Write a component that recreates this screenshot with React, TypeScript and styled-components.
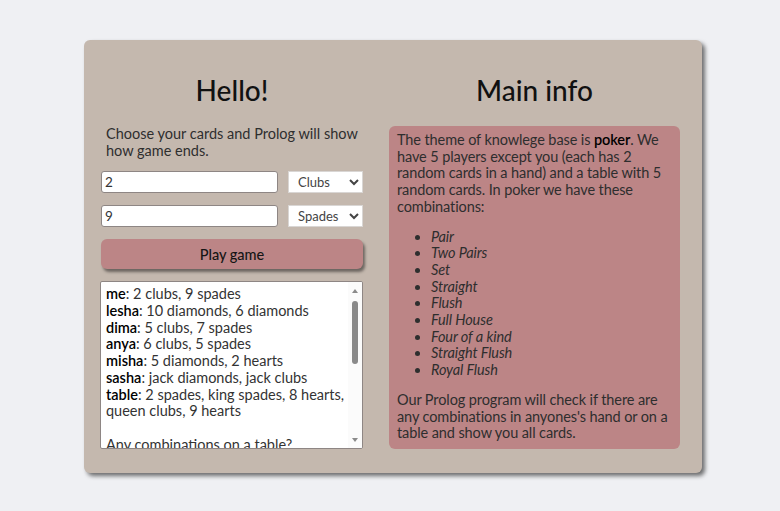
import React from "react";
import styled, { createGlobalStyle } from "styled-components";

const Global = createGlobalStyle`
  html, body { margin: 0; padding: 0; }
  body {
    background: #eff0f3;
    font-family: Lato, "Noto Sans", sans-serif;
    color: #2e2e2e;
  }
`;

const Page = styled.div`
  padding: 40px 0 0 84px;
  width: 780px;
  height: 511px;
  box-sizing: border-box;
`;

const Card = styled.div`
  width: 618px;
  height: 433px;
  box-sizing: border-box;
  background: #c4b8ae;
  border-radius: 6px;
  box-shadow: 3px 3px 4px rgba(0, 0, 0, 0.55);
  padding: 33px 22px 24px 17px;
  display: flex;
  gap: 26px;
`;

const Column = styled.div<{ $w: number }>`
  width: ${(p) => p.$w}px;
  display: flex;
  flex-direction: column;
`;

const Heading = styled.h1`
  margin: 0 0 19px;
  font-size: 28px;
  line-height: 34px;
  font-weight: 500;
  text-align: center;
  color: #111;
`;

const Intro = styled.p`
  margin: 0 0 12px;
  padding-left: 5px;
  font-size: 14.5px;
  line-height: 16.7px;
`;

const Row = styled.div`
  display: flex;
  justify-content: space-between;
  margin-bottom: 12px;
`;

const TextInput = styled.input`
  width: 177px;
  height: 22px;
  box-sizing: border-box;
  border: 1px solid #8e8684;
  border-radius: 3px;
  background: #fff;
  padding: 0 3px;
  font-family: inherit;
  font-size: 13.5px;
  color: #333;
  outline: none;
`;

const Select = styled.select`
  width: 75px;
  height: 22px;
  box-sizing: border-box;
  border: 1px solid #d9d6d4;
  border-radius: 0;
  background: #fff;
  padding: 0 4px 0 5px;
  font-family: inherit;
  font-size: 13px;
  color: #444;
`;

const PlayButton = styled.button`
  height: 30px;
  width: 100%;
  border: none;
  border-radius: 6px;
  background: #bc8586;
  box-shadow: 2px 3px 3px rgba(0, 0, 0, 0.45);
  font-family: inherit;
  font-size: 14.5px;
  font-weight: 500;
  color: #151515;
  margin-bottom: 12px;
  cursor: pointer;
`;

const OutputFrame = styled.div`
  position: relative;
  height: 168px;
  width: 263px;
  margin-left: -1px;
  box-sizing: border-box;
  background: #fff;
  border: 1px solid #8e8684;
  border-radius: 2px;
  overflow: hidden;
`;

const OutputText = styled.div`
  height: 100%;
  box-sizing: border-box;
  padding: 4px 16px 4px 5px;
  overflow: hidden;
  font-size: 14.5px;
  line-height: 16.7px;
  color: #333;
  white-space: pre-wrap;
`;

const ScrollTrack = styled.div`
  position: absolute;
  top: 0;
  right: 0;
  bottom: 0;
  width: 14px;
  background: #fbfbfb;
  display: flex;
  flex-direction: column;
  align-items: center;
  padding: 7px 0 6px;
  box-sizing: border-box;
`;

const Arrow = styled.div<{ $down?: boolean }>`
  width: 0;
  height: 0;
  border-left: 3.5px solid transparent;
  border-right: 3.5px solid transparent;
  ${(p) =>
    p.$down
      ? "border-top: 4px solid #8a8a8a; margin-top: auto;"
      : "border-bottom: 4px solid #8a8a8a;"}
`;

const Thumb = styled.div`
  width: 6px;
  height: 63px;
  margin-top: 8px;
  border-radius: 3px;
  background: #8a8a8a;
`;

const Name = styled.b`
  font-weight: 600;
  color: #000;
`;

const InfoBox = styled.div`
  flex: 1;
  background: #bc8586;
  border-radius: 6px;
  padding: 6px 8px 7px;
  font-size: 14.5px;
  line-height: 16.7px;
  letter-spacing: -0.1px;
  color: #2e2e2e;
`;

const InfoText = styled.p`
  margin: 0;
`;

const Strong = styled.b`
  font-weight: 600;
  color: #000;
`;

const Combos = styled.ul`
  margin: 13px 0 13px;
  padding-left: 34px;
  font-style: italic;
`;

const players: [string, string][] = [
  ["me", "2 clubs, 9 spades"],
  ["lesha", "10 diamonds, 6 diamonds"],
  ["dima", "5 clubs, 7 spades"],
  ["anya", "6 clubs, 5 spades"],
  ["misha", "5 diamonds, 2 hearts"],
  ["sasha", "jack diamonds, jack clubs"],
  ["table", "2 spades, king spades, 8 hearts, queen clubs, 9 hearts"],
];

const combos = [
  "Pair",
  "Two Pairs",
  "Set",
  "Straight",
  "Flush",
  "Full House",
  "Four of a kind",
  "Straight Flush",
  "Royal Flush",
];

const tail = `

Any combinations on a table?
No combinations.

Any combinations in players' hands?
lesha: pair of 6
sasha: pair of jacks`;

export default function App() {
  return (
    <Page>
      <Global />
      <Card>
        <Column $w={262}>
          <Heading>Hello!</Heading>
          <Intro>Choose your cards and Prolog will show how game ends.</Intro>
          <Row>
            <TextInput defaultValue="2" />
            <Select defaultValue="Clubs">
              <option>Clubs</option>
              <option>Spades</option>
              <option>Hearts</option>
              <option>Diamonds</option>
            </Select>
          </Row>
          <Row>
            <TextInput defaultValue="9" />
            <Select defaultValue="Spades">
              <option>Clubs</option>
              <option>Spades</option>
              <option>Hearts</option>
              <option>Diamonds</option>
            </Select>
          </Row>
          <PlayButton>Play game</PlayButton>
          <OutputFrame>
            <OutputText>
              {players.map(([n, c], i) => (
                <React.Fragment key={n}>
                  <Name>{n}</Name>: {c}
                  {i < players.length - 1 ? "\n" : ""}
                </React.Fragment>
              ))}
              {tail}
            </OutputText>
            <ScrollTrack>
              <Arrow />
              <Thumb />
              <Arrow $down />
            </ScrollTrack>
          </OutputFrame>
        </Column>
        <Column $w={292}>
          <Heading>Main info</Heading>
          <InfoBox>
            <InfoText>
              The theme of knowlege base is <Strong>poker</Strong>. We have 5
              players except you (each has 2 random cards in a hand) and a table
              with 5 random cards. In poker we have these combinations:
            </InfoText>
            <Combos>
              {combos.map((c) => (
                <li key={c}>{c}</li>
              ))}
            </Combos>
            <InfoText>
              Our Prolog program will check if there are any combinations in
              anyones's hand or on a table and show you all cards.
            </InfoText>
          </InfoBox>
        </Column>
      </Card>
    </Page>
  );
}
